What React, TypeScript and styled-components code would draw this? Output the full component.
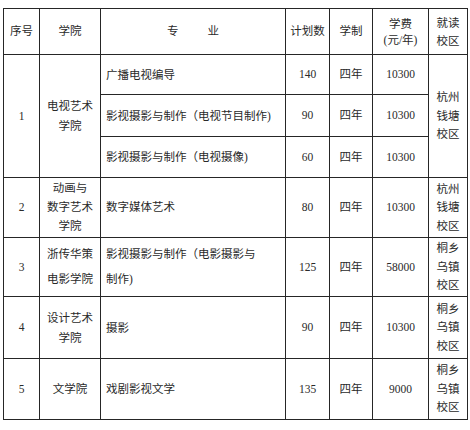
import React, { FC } from 'react';
import styled, { createGlobalStyle } from 'styled-components';

const GlobalStyle = createGlobalStyle`
    html, body {
        margin: 0;
        padding: 0;
        background: #fff;
    }
`;

const Page = styled.div`
    padding: 8px 0 0 3px;
`;

const Table = styled.div`
    display: grid;
    grid-template-columns: 35px 60px 184px 43px 42px 55px 38px;
    grid-template-rows: 45px 39px 41px 40px 59px 58px 61px 60px;
    gap: 1px;
    width: max-content;
    background: #262626;
    border: 1px solid #262626;
    font-family: "Liberation Serif", "Noto Sans CJK SC", serif;
    font-size: 11.5px;
    color: #2a2a2a;
`;

const Cell = styled.div<{ $left?: boolean; $span?: number; $lh?: number }>`
    background: #fff;
    display: flex;
    flex-direction: column;
    justify-content: center;
    align-items: ${p => (p.$left ? 'flex-start' : 'center')};
    padding: ${p => (p.$left ? '0 0 0 5px' : '0')};
    grid-row: ${p => (p.$span ? `span ${p.$span}` : 'auto')};
    line-height: ${p => p.$lh ?? 19}px;
    text-align: ${p => (p.$left ? 'left' : 'center')};
    white-space: nowrap;
`;

const Spread = styled.div`
    display: flex;
    gap: 29px;
`;

type Major = { name: string[]; plan: string; fee: string };
type Row = { no: string; college: string[]; majors: Major[]; campus: string[]; lh?: number };

const rows: Row[] = [
    {
        no: '1',
        college: ['电视艺术', '学院'],
        majors: [
            { name: ['广播电视编导'], plan: '140', fee: '10300' },
            { name: ['影视摄影与制作（电视节目制作)'], plan: '90', fee: '10300' },
            { name: ['影视摄影与制作（电视摄像)'], plan: '60', fee: '10300' },
        ],
        campus: ['杭州', '钱塘', '校区'],
        lh: 20,
    },
    {
        no: '2',
        college: ['动画与', '数字艺术', '学院'],
        majors: [{ name: ['数字媒体艺术'], plan: '80', fee: '10300' }],
        campus: ['杭州', '钱塘', '校区'],
    },
    {
        no: '3',
        college: ['浙传华策', '电影学院'],
        majors: [{ name: ['影视摄影与制作（电影摄影与', '制作)'], plan: '125', fee: '58000' }],
        campus: ['桐乡', '乌镇', '校区'],
        lh: 25,
    },
    {
        no: '4',
        college: ['设计艺术', '学院'],
        majors: [{ name: ['摄影'], plan: '90', fee: '10300' }],
        campus: ['桐乡', '乌镇', '校区'],
        lh: 20,
    },
    {
        no: '5',
        college: ['文学院'],
        majors: [{ name: ['戏剧影视文学'], plan: '135', fee: '9000' }],
        campus: ['桐乡', '乌镇', '校区'],
    },
];

const Lines: FC<{ items: string[] }> = ({ items }) => (
    <>
        {items.map((t, i) => (
            <span key={i}>{t}</span>
        ))}
    </>
);

export default function App() {
    return (
        <Page>
            <GlobalStyle />
            <Table>
                <Cell>序号</Cell>
                <Cell>学院</Cell>
                <Cell>
                    <Spread>
                        <span>专</span>
                        <span>业</span>
                    </Spread>
                </Cell>
                <Cell>计划数</Cell>
                <Cell>学制</Cell>
                <Cell $lh={16}>
                    <span>学费</span>
                    <span>(元/年)</span>
                </Cell>
                <Cell $lh={18}>
                    <span>就读</span>
                    <span>校区</span>
                </Cell>

                {rows.map(row => {
                    const span = row.majors.length;
                    return row.majors.map((m, i) => (
                        <React.Fragment key={row.no + i}>
                            {i === 0 && <Cell $span={span}>{row.no}</Cell>}
                            {i === 0 && (
                                <Cell $span={span} $lh={row.lh}>
                                    <Lines items={row.college} />
                                </Cell>
                            )}
                            <Cell $left $lh={row.lh}>
                                <Lines items={m.name} />
                            </Cell>
                            <Cell>{m.plan}</Cell>
                            <Cell>四年</Cell>
                            <Cell>{m.fee}</Cell>
                            {i === 0 && (
                                <Cell $span={span} $lh={18.5}>
                                    <Lines items={row.campus} />
                                </Cell>
                            )}
                        </React.Fragment>
                    ));
                })}
            </Table>
        </Page>
    );
}
